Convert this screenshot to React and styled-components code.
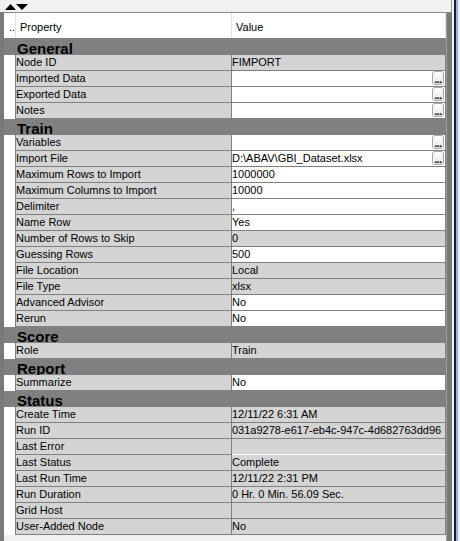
import React from 'react';
import styled, { createGlobalStyle } from 'styled-components';

const Global = createGlobalStyle`
  * { box-sizing: border-box; }
  html, body { margin: 0; padding: 0; background: #f0f0f0; }
  body { font-family: "Liberation Sans", Arial, sans-serif; }
`;

const Window = styled.div`
  display: flex;
  width: 460px;
  height: 541px;
  overflow: hidden;
  background: #f0f0f0;
`;

const Main = styled.div`
  display: flex;
  flex-direction: column;
  width: 452px;
`;

const Edge = styled.div`
  width: 8px;
  background: linear-gradient(
    to right,
    #f0f0f0 0 2px,
    #1e1e1e 2px 4px,
    #8fb6e0 4px 6px,
    #e4ecf5 6px 8px
  );
`;

const Toolbar = styled.div`
  height: 13px;
  flex: none;
  display: flex;
  align-items: flex-start;
  padding: 4px 0 0 5px;
  background: #f0f0f0;
  border-bottom: 1px solid #8a8a8a;
  border-right: 1px solid #9a9a9a;
`;

const Body = styled.div`
  flex: 1;
  display: flex;
`;

const SideFrame = styled.div`
  width: ${(p) => p.$w}px;
  flex: none;
  background: #7a7a7a;
  border-left: ${(p) => (p.$right ? '1px solid #9c9c9c' : 'none')};
`;

const Grid = styled.div`
  width: 442px;
  flex: none;
  display: flex;
  flex-direction: column;
  background: #f0f0f0;
  font-size: 11px;
  color: #000;
`;

const HeaderRow = styled.div`
  display: flex;
  height: 26px;
  flex: none;
  background: #fff;
  border-bottom: 1px solid #808080;
`;

const HeadCell = styled.div`
  width: ${(p) => p.$w}px;
  flex: none;
  padding: 3px 0 0 ${(p) => p.$pad}px;
  line-height: 22px;
  border-right: 1px solid #e2e2e2;
  white-space: nowrap;
  overflow: hidden;
`;

const Section = styled.div`
  height: 16px;
  flex: none;
  background: #808080;
  padding: 1px 0 0 13px;
  font-size: 15px;
  font-weight: bold;
  line-height: 17px;
  color: #000;
  white-space: nowrap;
`;

const Row = styled.div`
  display: flex;
  height: 16px;
  flex: none;
`;

const Indent = styled.div`
  width: 12px;
  flex: none;
  background: #fff;
  border-right: 1px solid #808080;
`;

const Label = styled.div`
  width: 216px;
  flex: none;
  background: #d4d4d4;
  border-right: 1px solid #808080;
  border-bottom: 1px solid #808080;
  line-height: 14px;
  white-space: nowrap;
  overflow: hidden;
`;

const Value = styled.div`
  width: 214px;
  flex: none;
  display: flex;
  align-items: flex-start;
  background: ${(p) => (p.$ro ? '#d4d4d4' : '#fff')};
  border-right: 1px solid #808080;
  border-bottom: 1px solid ${(p) => (p.$lightLine ? '#ffffff' : '#808080')};
  line-height: 14px;
  white-space: nowrap;
  overflow: hidden;
`;

const ValueText = styled.span`
  flex: 1;
  overflow: hidden;
`;

const EllipsisButton = styled.span`
  flex: none;
  width: 12px;
  height: 14px;
  margin-right: 1px;
  border: 1px solid #a9a9a9;
  border-radius: 3px;
  background: linear-gradient(#ffffff, #e6e6e6);
  display: flex;
  align-items: flex-end;
  justify-content: center;
  font-size: 10px;
  font-weight: bold;
  line-height: 8px;
  letter-spacing: -0.5px;
  color: #000;
`;

const sections = [
  {
    title: 'General',
    rows: [
      { label: 'Node ID', value: 'FIMPORT', ro: true },
      { label: 'Imported Data', value: '', btn: true },
      { label: 'Exported Data', value: '', btn: true },
      { label: 'Notes', value: '', btn: true },
    ],
  },
  {
    title: 'Train',
    rows: [
      { label: 'Variables', value: '', btn: true },
      { label: 'Import File', value: 'D:\\ABAV\\GBI_Dataset.xlsx', btn: true },
      { label: 'Maximum Rows to Import', value: '1000000' },
      { label: 'Maximum Columns to Import', value: '10000' },
      { label: 'Delimiter', value: ',' },
      { label: 'Name Row', value: 'Yes' },
      { label: 'Number of Rows to Skip', value: '0', ro: true },
      { label: 'Guessing Rows', value: '500' },
      { label: 'File Location', value: 'Local', ro: true },
      { label: 'File Type', value: 'xlsx', ro: true },
      { label: 'Advanced Advisor', value: 'No' },
      { label: 'Rerun', value: 'No' },
    ],
  },
  { title: 'Score', rows: [{ label: 'Role', value: 'Train', ro: true }] },
  { title: 'Report', rows: [{ label: 'Summarize', value: 'No' }] },
  {
    title: 'Status',
    rows: [
      { label: 'Create Time', value: '12/11/22 6:31 AM', ro: true },
      { label: 'Run ID', value: '031a9278-e617-eb4c-947c-4d682763dd96', ro: true },
      { label: 'Last Error', value: '', ro: true, lightLine: true },
      { label: 'Last Status', value: 'Complete', ro: true },
      { label: 'Last Run Time', value: '12/11/22 2:31 PM', ro: true },
      { label: 'Run Duration', value: '0 Hr. 0 Min. 56.09 Sec.', ro: true },
      { label: 'Grid Host', value: '', ro: true },
      { label: 'User-Added Node', value: 'No', ro: true },
    ],
  },
];

function Arrows() {
  return (
    <svg width="23" height="6" viewBox="0 0 23 6">
      <polygon points="0,6 5.5,0 11,6" fill="#000" />
      <polygon points="11,0 23,0 17,6" fill="#000" />
    </svg>
  );
}

export default function App() {
  return (
    <>
      <Global />
      <Window>
        <Main>
          <Toolbar>
            <Arrows />
          </Toolbar>
          <Body>
            <SideFrame $w={4} />
            <Grid>
              <HeaderRow>
                <HeadCell $w={12} $pad={5}>..</HeadCell>
                <HeadCell $w={216} $pad={4}>Property</HeadCell>
                <HeadCell $w={214} $pad={4}>Value</HeadCell>
              </HeaderRow>
              {sections.map((s) => (
                <React.Fragment key={s.title}>
                  <Section>{s.title}</Section>
                  {s.rows.map((r) => (
                    <Row key={r.label}>
                      <Indent />
                      <Label>{r.label}</Label>
                      <Value $ro={r.ro} $lightLine={r.lightLine}>
                        <ValueText>{r.value}</ValueText>
                        {r.btn && <EllipsisButton>...</EllipsisButton>}
                      </Value>
                    </Row>
                  ))}
                </React.Fragment>
              ))}
            </Grid>
            <SideFrame $w={6} $right />
          </Body>
        </Main>
        <Edge />
      </Window>
    </>
  );
}
